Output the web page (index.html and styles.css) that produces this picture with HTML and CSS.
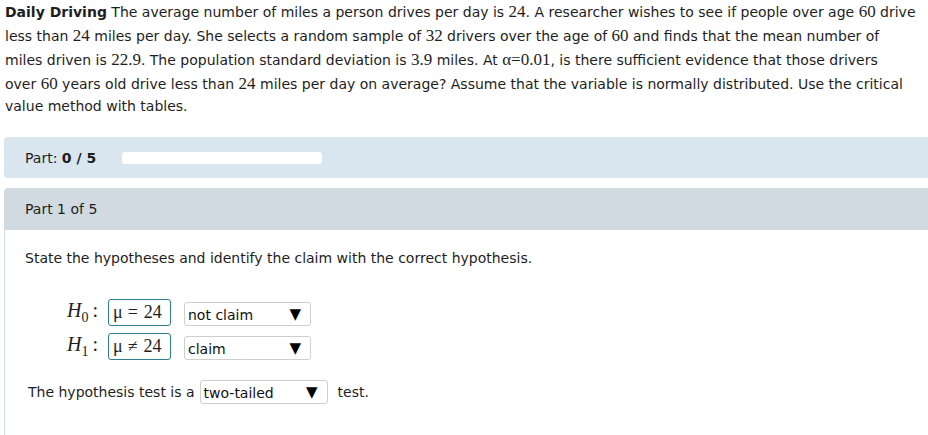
FILE: index.html
```html
<!DOCTYPE html>
<html>
<head>
<meta charset="utf-8">
<link rel="stylesheet" href="styles.css">
</head>
<body>
<p class="problem"><b>Daily Driving</b> The average number of miles a person drives per day is <span class="m">24</span>. A researcher wishes to see if people over age <span class="m">60</span> drive<br>less than <span class="m">24</span> miles per day. She selects a random sample of <span class="m">32</span> drivers over the age of <span class="m">60</span> and finds that the mean number of<br>miles driven is <span class="m">22.9</span>. The population standard deviation is <span class="m">3.9</span> miles. At <span class="m">α=0.01</span>, is there sufficient evidence that those drivers<br>over <span class="m">60</span> years old drive less than <span class="m">24</span> miles per day on average? Assume that the variable is normally distributed. Use the critical<br>value method with tables.</p>

<div class="progress-panel">
  <span>Part: <b>0 / 5</b></span>
  <div class="bar"></div>
</div>

<div class="part-head">Part 1 of 5</div>
<div class="part-body">
  <p class="instr">State the hypotheses and identify the claim with the correct hypothesis.</p>
  <div class="hyp">
    <div class="lab"><i>H</i><sub>0</sub><span class="colon">:</span></div>
    <div class="ans">μ<span class="op">=</span>24</div>
    <div class="sel">not claim<span class="tri">▼</span></div>

    <div class="lab"><i>H</i><sub>1</sub><span class="colon">:</span></div>
    <div class="ans">μ<span class="op">≠</span>24</div>
    <div class="sel">claim<span class="tri">▼</span></div>
  </div>
  <div class="test-line">
    <span>The hypothesis test is a</span>
    <div class="sel wide">two-tailed<span class="tri">▼</span></div>
    <span>test.</span>
  </div>
</div>
</body>
</html>
```
FILE: styles.css
```css
html, body {
  margin: 0;
  padding: 0;
  background: #fff;
}
body {
  font-family: "DejaVu Sans", Verdana, sans-serif;
  font-size: 14px;
  color: #1e1e1e;
  overflow: hidden;
}
.problem {
  margin: 0;
  padding: 0 0 0 5px;
  line-height: 20px;
  white-space: nowrap;
}
.m {
  display: inline-block;
  font-family: "Liberation Serif", "Times New Roman", serif;
  font-size: 17px;
  line-height: 24px;
}
.progress-panel {
  margin: 21px 0 0 4px;
  height: 41px;
  background: #d9e6f0;
  border-radius: 4px 0 0 4px;
  display: flex;
  align-items: center;
  padding-left: 21px;
  gap: 26px;
}
.bar {
  width: 200px;
  height: 12px;
  background: #fff;
  border-radius: 3px;
}
.part-head {
  margin: 10px 0 0 4px;
  height: 42px;
  background: #d0dae0;
  border-radius: 4px 0 0 0;
  display: flex;
  align-items: center;
  padding-left: 21px;
}
.part-body {
  margin-left: 4px;
  border-left: 1px solid #d0dae0;
  height: 220px;
  padding-left: 20px;
}
.instr {
  margin: 0;
  padding-top: 20px;
  line-height: 16px;
}
.hyp {
  margin-top: 33px;
  display: grid;
  grid-template-columns: 70px 63px 127px;
  column-gap: 13px;
  row-gap: 7px;
  align-items: center;
}
.lab {
  font-family: "Liberation Serif", "Times New Roman", serif;
  font-size: 20px;
  text-align: right;
  margin-right: -3px;
}
.lab sub {
  font-size: 14px;
  vertical-align: -5px;
}
.colon {
  margin-left: 4px;
}
.ans {
  border: 1px solid #2e7f8e;
  border-radius: 3px;
  font-family: "Liberation Serif", "Times New Roman", serif;
  font-size: 18px;
  display: flex;
  align-items: center;
  padding-left: 4px;
  box-sizing: border-box;
  height: 27px;
}
.op {
  margin: 0 6px 0 5px;
}
.sel {
  height: 24px;
  box-sizing: border-box;
  border: 1px solid #cfcfcf;
  border-radius: 3px;
  display: flex;
  align-items: center;
  justify-content: space-between;
  padding: 2px 9px 0 3px;
  color: #111;
  margin-top: 3px;
}
.tri {
  font-family: "DejaVu Sans", sans-serif;
  font-size: 15px;
  color: #000;
  margin-top: -2px;
}
.test-line {
  margin-top: 20px;
  margin-left: 3px;
  display: flex;
  align-items: center;
  gap: 10px;
}
.test-line .sel {
  margin: 0 0 0 -5px;
  width: 128px;
  height: 24px;
}
```
